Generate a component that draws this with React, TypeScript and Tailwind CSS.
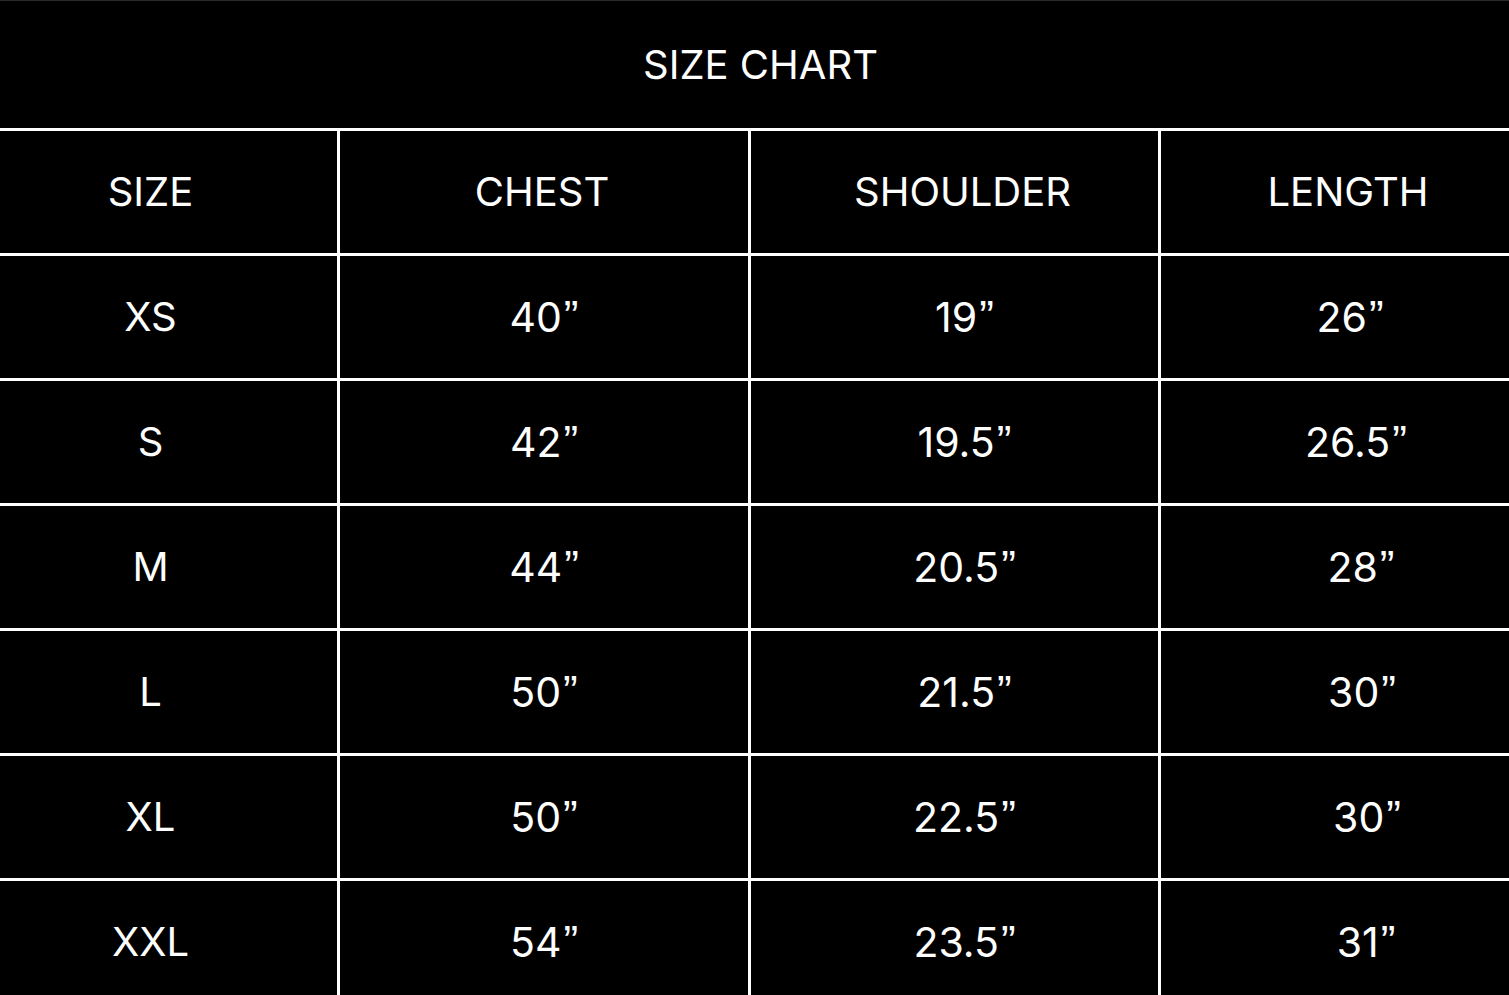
const rows = [
  { size: 'XS', chest: '40', shoulder: '19', length: '26', lcls: 'pl-[30px]' },
  { size: 'S', chest: '42', shoulder: '19.5', length: '26.5', lcls: 'pl-[42px]' },
  { size: 'M', chest: '44', shoulder: '20.5', length: '28', lcls: 'pl-[52px]' },
  { size: 'L', chest: '50', shoulder: '21.5', length: '30', lcls: 'pl-[54px]' },
  { size: 'XL', chest: '50', shoulder: '22.5', length: '30', lcls: 'pl-[64px]' },
  { size: 'XXL', chest: '54', shoulder: '23.5', length: '31', lcls: 'pl-[62px]' },
];

const cell = 'bg-black flex items-center justify-center h-[122px]';

// inch mark drawn in Arial-metric font so the quote is curly like the source
const Inch = ({ v }: { v: string }) => (
  <span className="text-[41px]">
    {v}
    <span className="ml-[2px] text-[44px]" style={{ fontFamily: '"Liberation Sans", Arial, sans-serif' }}>
      ”
    </span>
  </span>
);

export default function App() {
  return (
    <div
      className="w-[1509px] h-[995px] overflow-hidden bg-black text-white text-[40px] leading-none"
      style={{ fontFamily: 'Inter, "Liberation Sans", sans-serif' }}
    >
      {/* Title */}
      <div className="h-[128px] flex items-center justify-center pl-[12px] text-[40px] border-t border-[#2a2a2a]">
        SIZE CHART
      </div>

      {/* Table */}
      <div className="grid grid-cols-[337px_408px_407px_1fr] gap-[3px] bg-white pt-[3px]">
        <div className={`${cell} pr-[36px]`}>SIZE</div>
        <div className={`${cell} pr-[4px]`}>CHEST</div>
        <div className={`${cell} pl-[16px]`}>SHOULDER</div>
        <div className={`${cell} pl-[26px]`}>LENGTH</div>

        {rows.map((r) => (
          <>
            <div key={r.size + '-s'} className={`${cell} pr-[36px]`}>{r.size}</div>
            <div key={r.size + '-c'} className={cell}><Inch v={r.chest} /></div>
            <div key={r.size + '-sh'} className={`${cell} pl-[20px]`}><Inch v={r.shoulder} /></div>
            <div key={r.size + '-l'} className={`${cell} ${r.lcls}`}><Inch v={r.length} /></div>
          </>
        ))}
      </div>
    </div>
  );
}
